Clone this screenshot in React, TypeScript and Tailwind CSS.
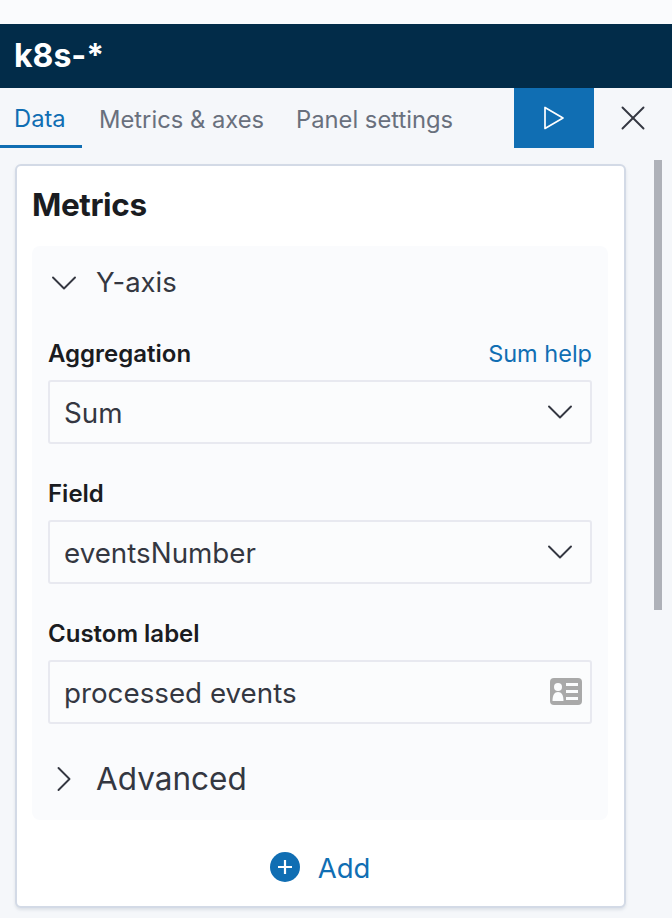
import { ChevronDown, ChevronRight, X } from "lucide-react";
import type { ReactNode } from "react";

function Field({
  label,
  help,
  children,
}: {
  label: string;
  help?: string;
  children: ReactNode;
}) {
  return (
    <div className="mx-4 mb-4">
      <div className="flex h-[60px] items-end justify-between pb-2 leading-9">
        <span className="text-2xl leading-9 font-semibold text-[#1a1c21]">{label}</span>
        {help && <span className="text-[23.5px] leading-9 text-[#106eb3]">{help}</span>}
      </div>
      {children}
    </div>
  );
}

function Input({ value, icon }: { value: string; icon: ReactNode }) {
  return (
    <div className="flex h-16 items-center justify-between rounded-[3px] border-2 border-[#e8e9f0] bg-[#fbfcfd] pl-[14px] pr-2 text-[27.75px] text-[#343741]">
      <span className="pt-[3px]">{value}</span>
      {icon}
    </div>
  );
}

function SelectArrow() {
  return <ChevronDown className="h-11 w-11 text-[#343741]" strokeWidth={1.05} />;
}

function CardIcon() {
  return (
    <svg width="32" height="28" viewBox="0 0 32 28">
      <rect width="32" height="27" rx="4" fill="#a9a9a9" />
      <circle cx="8" cy="9" r="4" fill="#fbfcfd" />
      <path d="M2.500 23c0-6 2-9 5.500-9s5.500 3 5.500 9z" fill="#fbfcfd" />
      <rect x="16" y="5" width="12" height="3" fill="#fbfcfd" />
      <rect x="16" y="12" width="12" height="3" fill="#fbfcfd" />
      <rect x="16" y="19" width="12" height="3" fill="#fbfcfd" />
    </svg>
  );
}

export default function App() {
  return (
    <div className="h-[918px] w-[672px] overflow-hidden bg-[#f5f7fa] font-['Inter',sans-serif]">
      <div className="h-6 bg-[#fafbfd]" />
      <div className="flex h-16 items-center bg-[#022c49] pl-[14px] text-[32px] font-bold text-white">
        k8s-*
      </div>

      <div className="flex h-[60px] whitespace-nowrap text-[23.75px]">
        <div className="flex w-[82px] items-center border-b-[3px] border-[#106eb3] pl-[14px] pt-1 text-[#106eb3]">
          Data
        </div>
        <div className="flex items-center pl-[17px] pt-1 text-[#69707d]">Metrics &amp; axes</div>
        <div className="flex items-center pl-8 pt-1 text-[#69707d]">Panel settings</div>
        <div className="ml-auto flex w-20 items-center justify-center bg-[#106eb3]">
          <svg width="22" height="26" viewBox="0 0 22 26" fill="none">
            <path
              d="M2 2.500v21l18-10.500z"
              stroke="#fff"
              strokeWidth="1.700"
              strokeLinejoin="round"
            />
          </svg>
        </div>
        <div className="flex w-[78px] items-center justify-center">
          <X className="h-[42px] w-[42px] text-[#343741]" strokeWidth={1.1} />
        </div>
      </div>

      <div className="flex">
        <div className="ml-[15px] mt-4 h-[744px] w-[611px] rounded-md border-2 border-[#d3dae6] bg-white shadow-[0_2px_3px_rgba(152,162,179,0.25)]">
          <div className="flex h-20 items-center pb-[2px] pl-[15px] text-[31.5px] font-bold tracking-[-0.4px] text-[#1a1c21]">
            Metrics
          </div>
          <div className="ml-[15px] mr-4 h-[574px] rounded-lg bg-[#fafbfd]">
            <div className="flex h-[74px] items-center text-[27.5px] text-[#343741]">
              <ChevronDown className="ml-[10px] h-11 w-11" strokeWidth={1.05} />
              <span className="ml-[10px]">Y-axis</span>
            </div>
            <Field label="Aggregation" help="Sum help">
              <Input value="Sum" icon={<SelectArrow />} />
            </Field>
            <Field label="Field">
              <Input value="eventsNumber" icon={<SelectArrow />} />
            </Field>
            <Field label="Custom label">
              <Input value="processed events" icon={<CardIcon />} />
            </Field>
            <div className="flex h-[78px] items-center text-[31.5px] text-[#343741]">
              <ChevronRight className="ml-[10px] h-11 w-11" strokeWidth={1.05} />
              <span className="ml-[10px]">Advanced</span>
            </div>
          </div>
          <div className="flex h-[86px] items-center justify-center gap-[18px] pr-px pt-2 text-[27.5px] text-[#106eb3]">
            <svg width="30" height="30" viewBox="0 0 30 30">
              <circle cx="15" cy="15" r="15" fill="#106eb3" />
              <path d="M15 8v14M8 15h14" stroke="#fff" strokeWidth="2.200" />
            </svg>
            <span className="pt-[3px]">Add</span>
          </div>
        </div>
        <div className="ml-[28px] mt-3 h-[450px] w-2 bg-[#aeb1b8]" />
      </div>
    </div>
  );
}
